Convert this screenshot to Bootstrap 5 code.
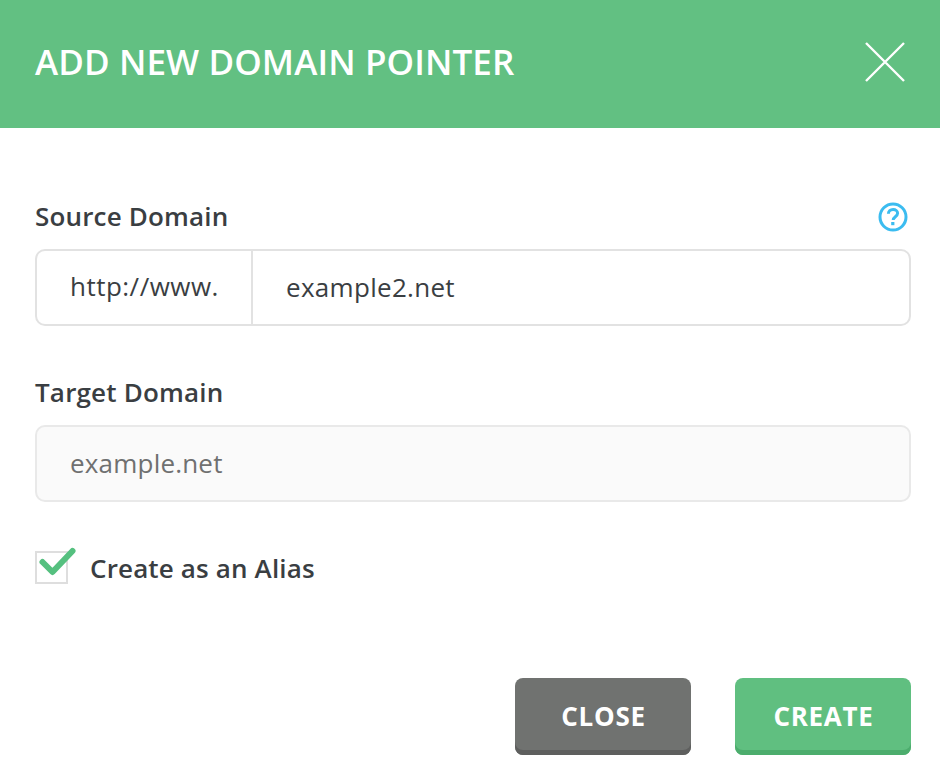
<!DOCTYPE html>
<html lang="en">
<head>
<meta charset="utf-8">
<title>Add new domain pointer</title>
<link href="https://cdn.jsdelivr.net/npm/bootstrap@5.3.0/dist/css/bootstrap.min.css" rel="stylesheet">
<style>
body{font-family:"Open Sans",sans-serif;color:#3a3e42;background:#fff;margin:0;height:771px;overflow:hidden}
.dp-head{height:128px;background:#62c082;padding:0 35px 5px;color:#fff}
.dp-title{font-size:35px;font-weight:600;margin:0;line-height:1;font-family:"Open Sans",sans-serif;letter-spacing:.1px}
.dp-x{width:42px;height:42px;padding:0;border:0;background:none;margin-right:-1px;display:block}
.dp-body{padding:73px 29px 0 35px}
.dp-label{font-size:26px;font-weight:600;line-height:30px;margin:0;color:#3a3e42;letter-spacing:.18px}
.dp-labelrow{height:48px}
.dp-help{margin:1px 3px 0 0}
.dp-second{height:48px;margin-top:51px}
.dp-group{height:77px}
.dp-group .input-group-text,.dp-group .form-control{font-family:"Open Sans",sans-serif;font-size:26px;letter-spacing:.3px;color:#3a3e42;border:2px solid #e2e2e2;border-radius:10px;background:#fff;height:77px;padding:0 33px 2px}
.dp-group .input-group-text{width:218px;letter-spacing:.48px;justify-content:flex-start;border-top-right-radius:0;border-bottom-right-radius:0}
.dp-group .form-control{margin-left:-2px!important;border-top-left-radius:0;border-bottom-left-radius:0}
.dp-plain.form-control{font-family:"Open Sans",sans-serif;font-size:26px;letter-spacing:.2px;height:77px;border:2px solid #e9e9e9;border-radius:10px;background:#fafafa;padding:0 33px 2px;color:#3a3e42}
.dp-plain.form-control::placeholder{color:#6f7070;opacity:1}
.dp-check{height:33px;display:flex;align-items:center;margin-top:49px}
.dp-box{width:33px;height:33px;border:2px solid #dedede;flex:none;position:relative;background:#fff}
.dp-box svg{position:absolute;left:3px;top:-3px;overflow:visible}
.dp-box input{position:absolute;inset:0;opacity:0;margin:0}
.dp-checklabel{font-size:26px;font-weight:600;margin-left:22px;line-height:34px;color:#3a3e42;letter-spacing:.15px}
.dp-btn{font-family:"Open Sans",sans-serif;width:176px;height:77px;border:0;border-radius:8px;color:#fff;font-size:26px;font-weight:700;letter-spacing:.7px;padding:0 0 0 1px}
.dp-btn:hover,.dp-btn:active{color:#fff}
.dp-close{background:#707270;box-shadow:inset 0 -5px 0 #5e5f5e}
.dp-close:hover{background:#707270}
.dp-create{background:#60bf80;box-shadow:inset 0 -5px 0 #4cad6d}
.dp-create:hover{background:#60bf80}
.dp-actions{margin-top:94px;gap:44px}
</style>
</head>
<body>
<div class="d-flex flex-column">
  <header class="dp-head d-flex align-items-center justify-content-between">
    <h1 class="dp-title">ADD NEW DOMAIN POINTER</h1>
    <button type="button" class="dp-x" aria-label="Close">
      <svg width="42" height="42" viewBox="0 0 42 42"><path d="M2 2 L40 40 M40 2 L2 40" stroke="#fff" stroke-width="2.4" fill="none"/></svg>
    </button>
  </header>
  <main class="dp-body">
    <form>
      <div class="dp-labelrow d-flex justify-content-between align-items-start">
        <label class="dp-label" for="src">Source Domain</label>
        <svg class="dp-help" width="30" height="30" viewBox="0 0 30 30"><circle cx="15" cy="15" r="13" fill="none" stroke="#3bbcf0" stroke-width="3"/><path d="M10.4 11.8c0-2.7 2-4.3 4.7-4.3 2.6 0 4.5 1.5 4.5 3.8 0 3.4-4.4 3.4-4.4 6.7" fill="none" stroke="#3bbcf0" stroke-width="3"/><rect x="13.2" y="20" width="3.2" height="3.2" fill="#3bbcf0"/></svg>
      </div>
      <div class="input-group dp-group">
        <span class="input-group-text">http://www.</span>
        <input id="src" class="form-control" type="text" value="example2.net">
      </div>
      <div class="dp-second">
        <label class="dp-label d-block" for="tgt">Target Domain</label>
      </div>
      <input id="tgt" class="form-control dp-plain" type="text" placeholder="example.net">
      <div class="dp-check">
        <span class="dp-box"><input type="checkbox" id="alias" checked aria-label="Create as an Alias">
          <svg width="36" height="36" viewBox="0 0 36 36"><path d="M2.5 12 L12.5 22 L32.5 1" fill="none" stroke="#55c07f" stroke-width="6" stroke-linecap="round" stroke-linejoin="round"/></svg>
        </span>
        <label class="dp-checklabel" for="alias">Create as an Alias</label>
      </div>
      <div class="dp-actions d-flex justify-content-end">
        <button type="button" class="btn dp-btn dp-close">CLOSE</button>
        <button type="button" class="btn dp-btn dp-create">CREATE</button>
      </div>
    </form>
  </main>
</div>
</body>
</html>
